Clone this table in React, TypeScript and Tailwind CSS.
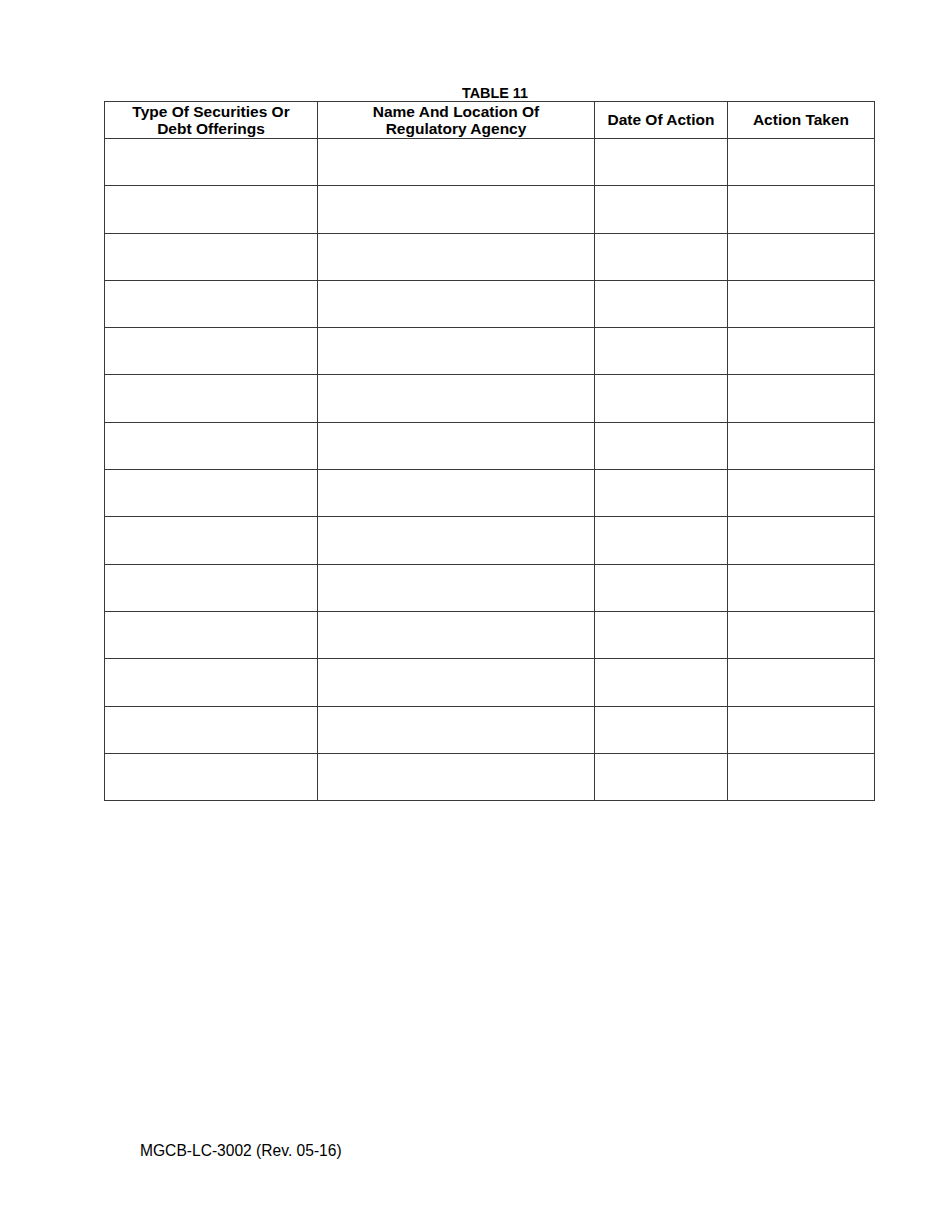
const columns = [
  { label: ["Type Of Securities Or", "Debt Offerings"], width: "w-[213px]" },
  { label: ["Name And Location Of", "Regulatory Agency"], width: "w-[277px]" },
  { label: ["Date Of Action"], width: "w-[133px]" },
  { label: ["Action Taken"], width: "w-[147px]" },
];

const rows = Array.from({ length: 14 }, (_, i) => i);

export default function App() {
  return (
    <main className="min-h-[1230px] w-[950px] bg-white text-black font-['Liberation_Sans',Arial,sans-serif]">
      <section className="pl-[104px] pt-[85px]">
        {/* Table caption */}
        <div className="w-[771px] pl-[11px] text-center text-[14.4px] font-bold leading-[16px]">
          TABLE 11
        </div>

        <table className="w-[771px] table-fixed border-collapse">
          <thead>
            <tr className="h-[37px]">
              {columns.map((c) => (
                <th
                  key={c.label[0]}
                  className={`${c.width} border border-[#3a3a3a] px-1 pb-[1px] align-middle text-center text-[15.5px] font-bold leading-[17px]`}
                >
                  {c.label.map((line) => (
                    <div key={line}>{line}</div>
                  ))}
                </th>
              ))}
            </tr>
          </thead>
          <tbody>
            {rows.map((r) => (
              <tr key={r} className="h-[47.3px]">
                {columns.map((c) => (
                  <td key={c.label[0]} className="border border-[#3a3a3a]" />
                ))}
              </tr>
            ))}
          </tbody>
        </table>
      </section>

      {/* Footer form number */}
      <footer className="pl-[140px] pt-[341px] text-[15.6px] leading-[18px]">
        MGCB-LC-3002 (Rev. 05-16)
      </footer>
    </main>
  );
}
